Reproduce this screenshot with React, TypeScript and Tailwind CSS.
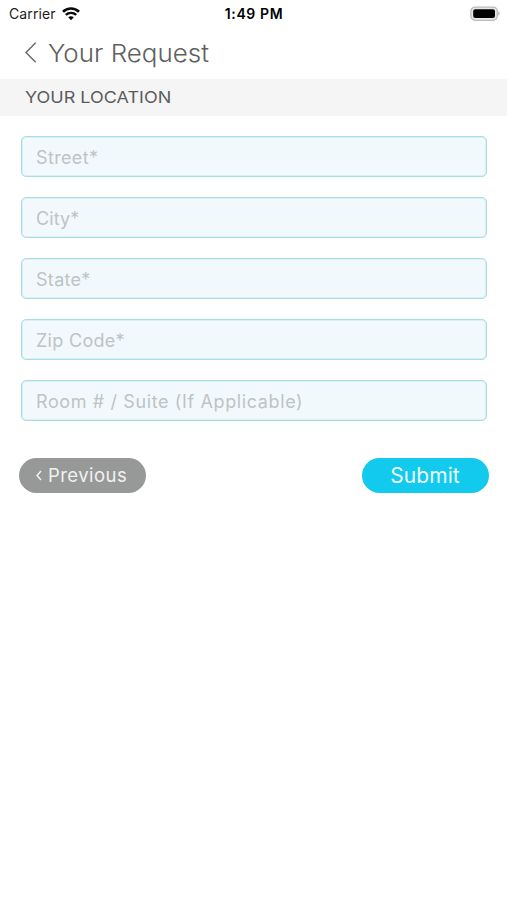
const fields = [
  { label: 'Street*', style: 'text-[18px] tracking-[0.35px]' },
  { label: 'City*', style: 'text-[18px] tracking-[0.1px]' },
  { label: 'State*', style: 'text-[18px] tracking-[0.3px]' },
  { label: 'Zip Code*', style: 'text-[18px] tracking-[0.3px]' },
  { label: 'Room # / Suite (If Applicable)', style: 'text-[18px] tracking-[0.62px]' },
];

function StatusBar() {
  return (
    <div className="grid h-7 grid-cols-3 items-center pl-[9px] pr-[7px] text-black">
      <div className="flex items-center gap-[6px]">
        <span className="text-[14px] leading-7 tracking-[0.1px] text-[#222]">Carrier</span>
        <svg width="18" height="14" viewBox="0 0 18 14" fill="none" stroke="#080808">
          <path d="M1 4.7C5.5 .4 12.5 .4 17 4.7" strokeWidth="2.7" />
          <path d="M3.8 7.9C6.7 5.2 11.3 5.2 14.2 7.9" strokeWidth="2.4" />
          <path d="M6.2 10.2C7.8 8.8 10.2 8.8 11.8 10.2L9 13.2Z" fill="#080808" stroke="none" />
        </svg>
      </div>
      <span className="-ml-px text-center text-[14px] font-semibold leading-7 tracking-[0.6px]">1:49 PM</span>
      <svg className="-mt-px justify-self-end" width="30" height="16" viewBox="0 0 30 16">
        <rect x="0.9" y="1.1" width="26.4" height="13.2" rx="4.2" fill="#e8e8e8" stroke="#bcbcbc" strokeWidth="1.3" />
        <rect x="3.2" y="3.3" width="21.8" height="8.8" rx="2" fill="#000" />
        <path d="M28.4 5.6C29.9 6.2 29.9 9.2 28.4 9.8Z" fill="#aaa" />
      </svg>
    </div>
  );
}

export default function App() {
  return (
    <main className="h-[900px] w-[507px] overflow-hidden bg-white font-['Inter',sans-serif]">
      <StatusBar />
      <header className="flex h-[51px] items-center pl-[25px]">
        <svg width="12" height="21" viewBox="0 0 12 21" className="-mt-[2px]" fill="none" stroke="#666" strokeWidth="1.4">
          <path d="M10.7 .8L1 10.5L10.7 20.2" />
        </svg>
        <h1 className="ml-[11px] origin-left scale-x-[1.06] text-[24.5px] font-light text-[#606060]">Your Request</h1>
      </header>
      <h2 className="flex h-[37px] items-center bg-[#f5f5f5] pl-[25px] text-[16.5px] font-normal text-[#5c5c5c]">
        <span className="origin-left scale-x-[1.09]">YOUR LOCATION</span>
      </h2>
      <section className="flex flex-col gap-5 px-[21px] pt-5">
        {fields.map((f) => (
          <div
            key={f.label}
            className="flex h-[41px] w-[466px] items-center rounded-[5px] border-[1.5px] border-[#a8dce8] bg-[#f2f9fc] pl-[14px] pt-[2px] text-[#bec3c5] shadow-[inset_0_0_0_1px_#dceff5]"
          >
            <span className={f.style}>{f.label}</span>
          </div>
        ))}
      </section>
      <div className="flex justify-between pl-[19px] pr-[18px] pt-[37px]">
        <button className="flex h-[35px] w-[127px] items-center rounded-full bg-[#979998] pl-[17px] text-[18.5px] text-[#f1f1f1]">
          <svg width="6" height="11" viewBox="0 0 6 11" fill="none" stroke="currentColor" strokeWidth="1.5">
            <path d="M5 1L1 5.5L5 10" />
          </svg>
          <span className="ml-[6px] pt-px tracking-[0.45px]">Previous</span>
        </button>
        <button className="h-[35px] w-[127px] rounded-full bg-[#12c9ee] pr-px text-[21px] tracking-[0.1px] text-[#edfdff]">Submit</button>
      </div>
    </main>
  );
}
